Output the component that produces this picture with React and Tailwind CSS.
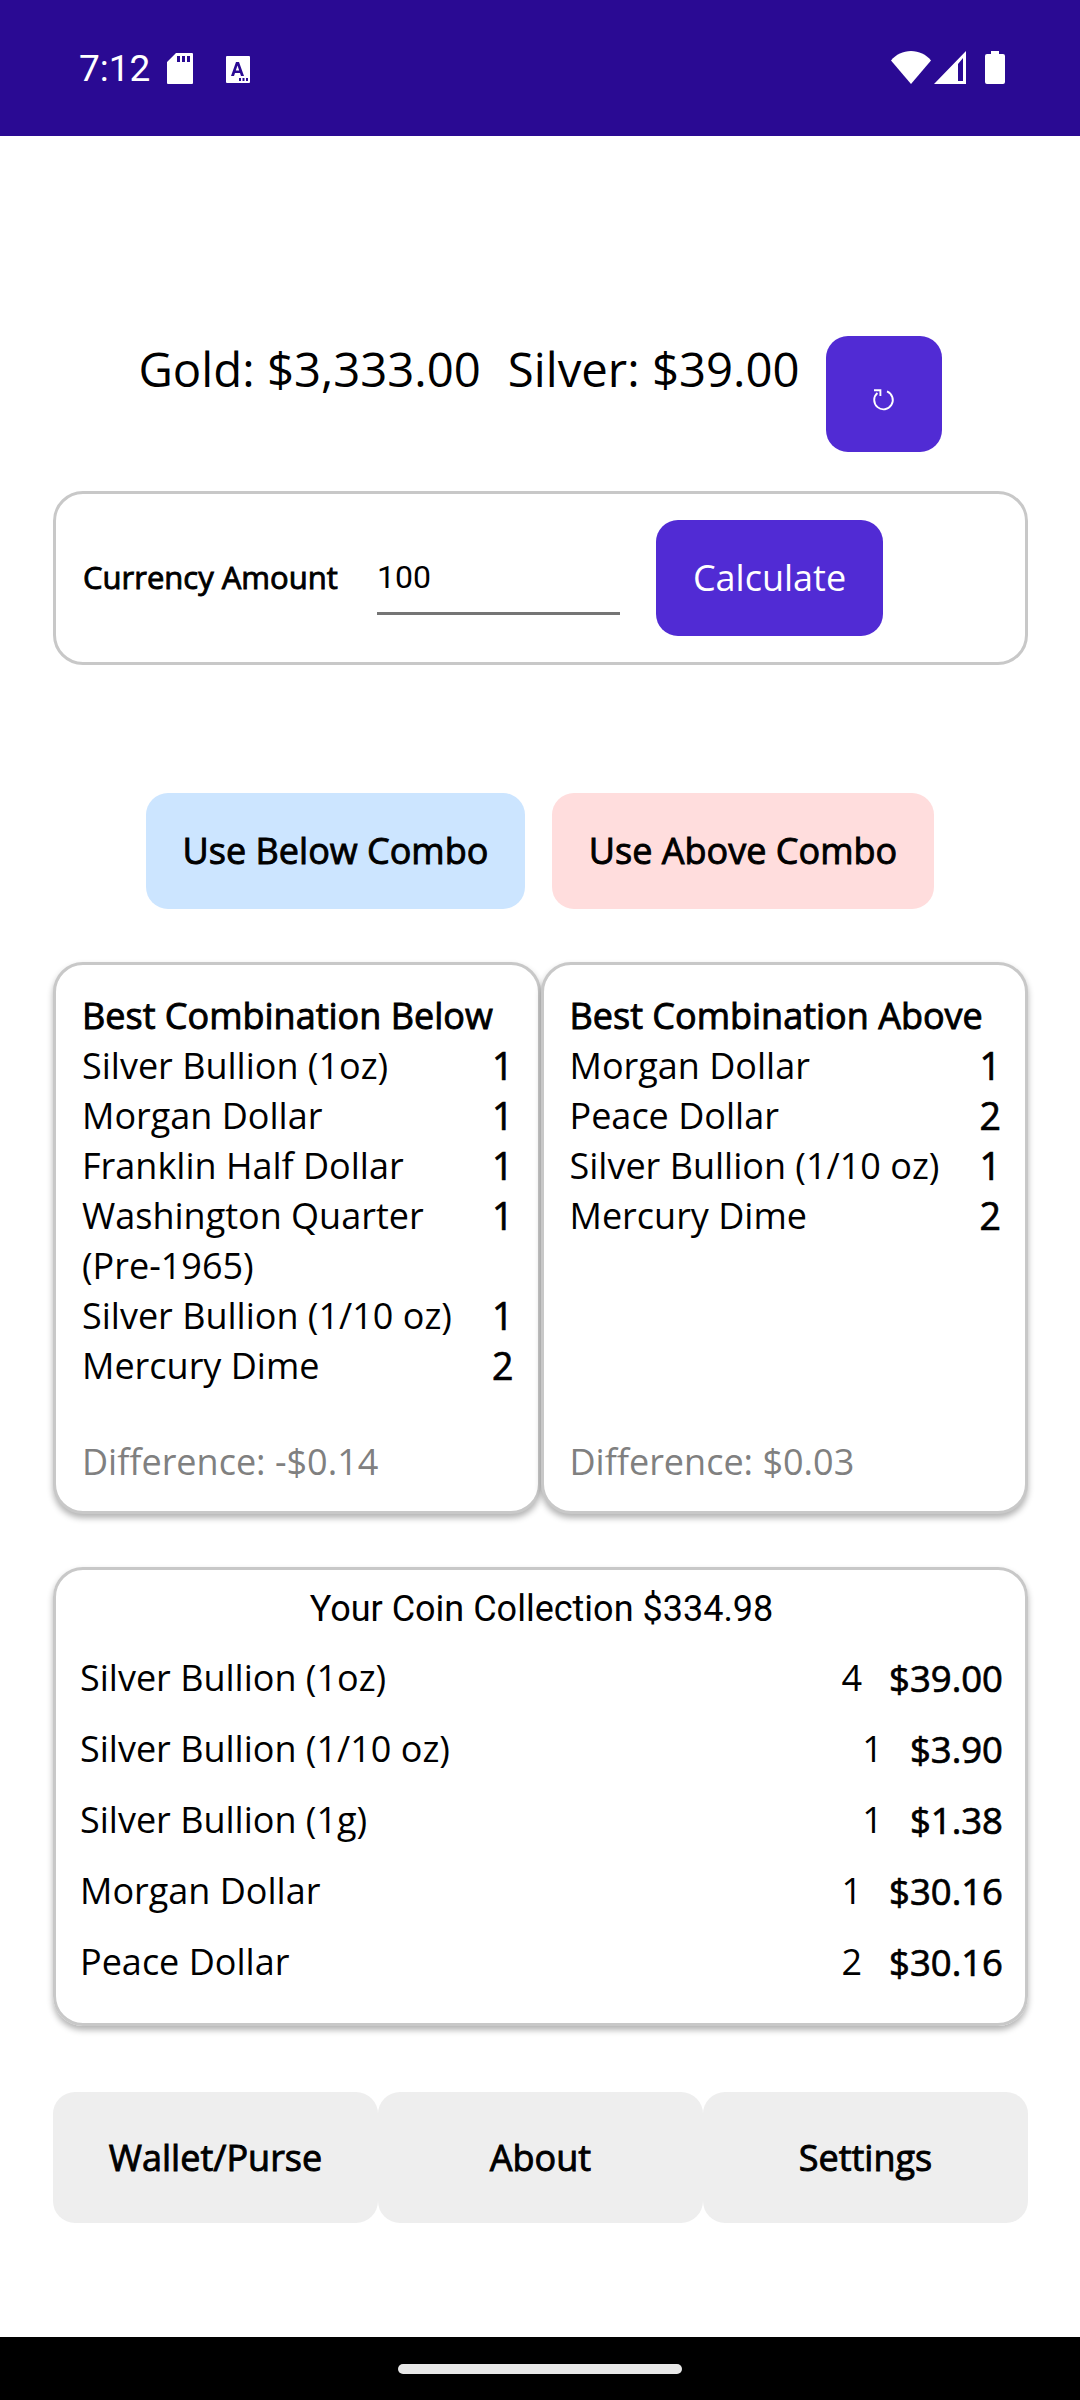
import React from "react";

const below = [
  ["Silver Bullion (1oz)", 1],
  ["Morgan Dollar", 1],
  ["Franklin Half Dollar", 1],
  ["Washington Quarter (Pre-1965)", 1],
  ["Silver Bullion (1/10 oz)", 1],
  ["Mercury Dime", 2],
];

const above = [
  ["Morgan Dollar", 1],
  ["Peace Dollar", 2],
  ["Silver Bullion (1/10 oz)", 1],
  ["Mercury Dime", 2],
];

const collection = [
  ["Silver Bullion (1oz)", 4, "$39.00"],
  ["Silver Bullion (1/10 oz)", 1, "$3.90"],
  ["Silver Bullion (1g)", 1, "$1.38"],
  ["Morgan Dollar", 1, "$30.16"],
  ["Peace Dollar", 2, "$30.16"],
];

const fauxBold = "[-webkit-text-stroke:0.9px_#000]";
const lightBold = "[-webkit-text-stroke:0.7px_#000]";

function StatusBar() {
  return (
    <div className="h-[136px] shrink-0 bg-[#2a0a93] flex items-start text-white pl-[79px] pr-[75px] pt-[51px]">
      <span className="font-['Roboto',sans-serif] text-[37px] leading-[34px] mt-[1px] w-[88px]">7:12</span>
      <svg width="26" height="31" viewBox="0 0 26 31" className="mt-[2px]" fill="white">
        <path fillRule="evenodd" d="M9 0H25a1 1 0 0 1 1 1V30a1 1 0 0 1-1 1H1a1 1 0 0 1-1-1V9ZM10 3V9H13V3ZM15 3V9H18V3ZM20 3V9H23V3Z" />
      </svg>
      <svg width="24" height="27" viewBox="0 0 24 27" className="mt-[5px] ml-[33px]" fill="white">
        <path fillRule="evenodd" d="M1 0H23a1 1 0 0 1 1 1V26a1 1 0 0 1-1 1H1a1 1 0 0 1-1-1V1a1 1 0 0 1 1-1ZM10 6 5 20H8L9 17H14L15 20H18L13 6ZM11.5 9.5 13.2 14.5H9.8ZM13 22V25H15V22ZM16.5 22V25H18.5V22ZM20 22V25H22V22Z" />
      </svg>
      <div className="flex-1" />
      <svg width="40" height="33" viewBox="0 0 40 33" fill="white">
        <path d="M20 33 0 9.5C5 3.5 12 0 20 0s15 3.5 20 9.5Z" />
      </svg>
      <svg width="32" height="33" viewBox="0 0 32 33" className="ml-[3px]" fill="white">
        <path fillRule="evenodd" d="M32 0V33H0ZM24 13V30H29V7Z" />
      </svg>
      <svg width="20" height="33" viewBox="0 0 20 33" className="ml-[19px]" fill="white">
        <path d="M6 0H14V3H18a2 2 0 0 1 2 2V31a2 2 0 0 1-2 2H2a2 2 0 0 1-2-2V5a2 2 0 0 1 2-2H6Z" />
      </svg>
    </div>
  );
}

function ComboCard({ title, rows, difference }) {
  return (
    <div className="flex flex-col border-[3px] border-[#c8c8c8] rounded-[30px] bg-white pl-[26px] pr-[24px] pt-[26px] pb-[24px] shadow-[0_4px_6px_rgba(0,0,0,0.3)]">
      <div className="flex-1 mb-[44px]">
        <div className={fauxBold}>{title}</div>
        {rows.map(([name, qty]) => (
          <div key={name} className="flex justify-between gap-[20px]">
            <span>{name}</span>
            <span className={`text-[37.5px] ${lightBold}`}>{qty}</span>
          </div>
        ))}
      </div>
      <div className="text-[#808080]">{difference}</div>
    </div>
  );
}

export default function App() {
  return (
    <div className="h-[2400px] flex flex-col bg-white text-black font-['Open_Sans',sans-serif] text-[36px] leading-[50px]">
      <StatusBar />

      <div className="flex-1 pl-[53px] pr-[52px]">
        <div className="flex justify-center mt-[200px] pr-[1px] gap-[26px]">
          <div className="flex gap-[27px] text-[47.3px] leading-[66px]">
            <span>Gold: $3,333.00</span>
            <span>Silver: $39.00</span>
          </div>
          <button className="w-[116px] h-[116px] rounded-[22px] bg-[#512bd4] flex items-center justify-center pt-[7px]">
            <svg width="50" height="45" viewBox="0 0 50 45" fill="none" stroke="white" strokeWidth="1.9">
              <path d="M18.4 18A9.3 9.3 0 1 0 28 16.4" />
              <path d="M15 15.2H21.4V21" />
            </svg>
          </button>
        </div>

        <div className="flex items-center mt-[39px] h-[174px] border-[3px] border-[#c8c8c8] rounded-[30px] px-[27px]">
          <span className={`w-[294px] text-[31px] -mt-[3px] ${fauxBold}`}>Currency Amount</span>
          <div className="w-[243px] h-[116px] relative">
            <span className="absolute left-0 top-[38px] font-['Roboto',sans-serif] text-[32px] leading-[38px]">100</span>
            <div className="absolute left-0 right-0 top-[92px] h-[3px] bg-[#757575]" />
          </div>
          <button className="ml-[36px] w-[227px] h-[116px] rounded-[22px] bg-[#512bd4] text-white">
            Calculate
          </button>
        </div>

        <div className="flex justify-center gap-[27px] mt-[128px] pr-[1px]">
          <button className={`w-[379px] h-[116px] rounded-[22px] bg-[#cce5ff] ${fauxBold}`}>Use Below Combo</button>
          <button className={`w-[382px] h-[116px] rounded-[22px] bg-[#ffdddd] ${fauxBold}`}>Use Above Combo</button>
        </div>

        <div className="grid grid-cols-2 mt-[53px] h-[552px]">
          <ComboCard title="Best Combination Below" rows={below} difference="Difference: -$0.14" />
          <ComboCard title="Best Combination Above" rows={above} difference="Difference: $0.03" />
        </div>

        <div className="h-[459px] mt-[53px] border-[3px] border-[#c8c8c8] rounded-[30px] pl-[24px] pr-[22px] pt-[17px] shadow-[0_4px_6px_rgba(0,0,0,0.3)]">
          <div className="text-center font-['Roboto',sans-serif] leading-[44px] mb-[11px]">Your Coin Collection $334.98</div>
          {collection.map(([name, qty, value]) => (
            <div key={name} className="flex items-center h-[71px]">
              <span className="flex-1">{name}</span>
              <span>{qty}</span>
              <span className={`ml-[27px] text-[36.5px] ${lightBold}`}>{value}</span>
            </div>
          ))}
        </div>

        <div className="flex mt-[66px]">
          <button className={`flex-1 h-[131px] rounded-[22px] bg-[#eeeeee] ${fauxBold}`}>Wallet/Purse</button>
          <button className={`flex-1 h-[131px] rounded-[22px] bg-[#eeeeee] ${fauxBold}`}>About</button>
          <button className={`flex-1 h-[131px] rounded-[22px] bg-[#eeeeee] ${fauxBold}`}>Settings</button>
        </div>
      </div>

      <div className="h-[63px] shrink-0 bg-black flex justify-center pt-[27px]">
        <div className="w-[284px] h-[10px] rounded-full bg-[#e8e8e8]" />
      </div>
    </div>
  );
}
